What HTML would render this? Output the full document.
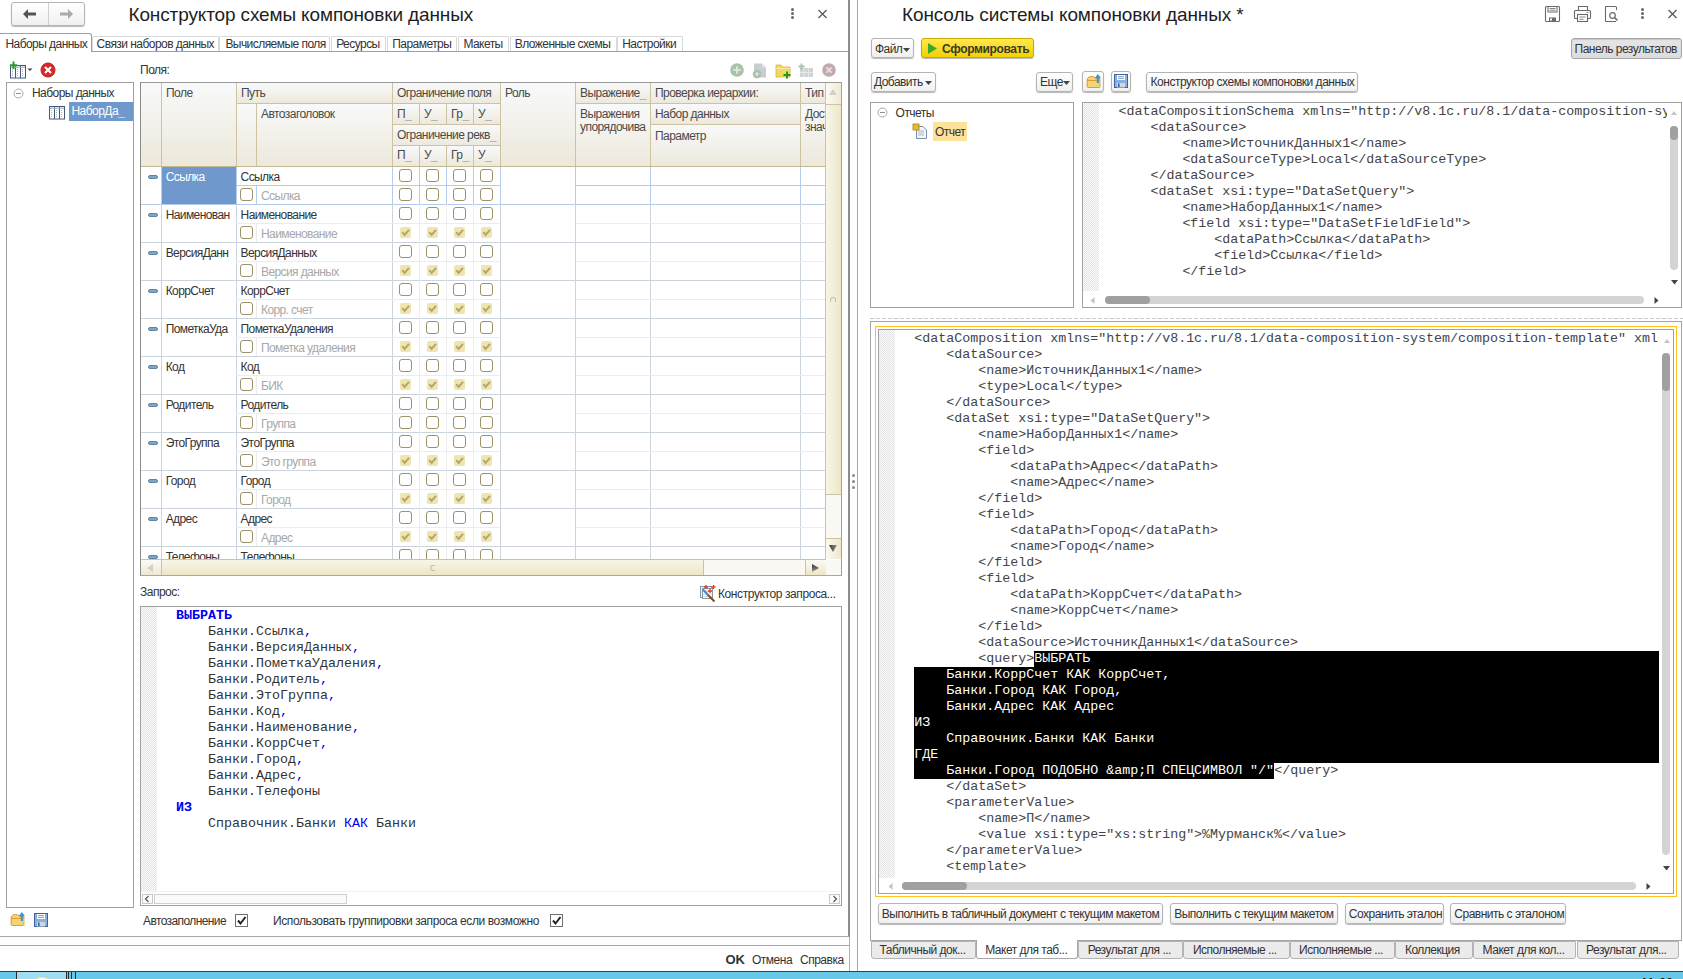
<!DOCTYPE html><html><head><meta charset="utf-8"><style>
*{margin:0;padding:0;box-sizing:border-box}
html,body{width:1683px;height:979px;overflow:hidden;background:#fff;position:relative}
body div{position:absolute}
.t{font-family:"Liberation Sans",sans-serif;white-space:nowrap}
.m{font-family:"Liberation Mono",monospace;white-space:pre;font-size:13.33px;line-height:16px;color:#444}
.btn{border:1px solid #b4b4b4;border-radius:3px;background:linear-gradient(#fff,#f0f0f0);box-shadow:0 1px 1px rgba(0,0,0,.28)}
.cb{width:13px;height:13px;border:1px solid #9c926a;border-radius:3px;background:#fff}
.cbc{width:11px;height:11px;border-radius:2px;background:#efe5b0}
.hatch{background:repeating-conic-gradient(#e2e2e2 0 25%,#fdfdfd 0 50%) 0 0/2px 2px}
</style></head><body><div class="btn" style="left:11px;top:2px;width:74px;height:24px"></div>
<div style="left:48px;top:3px;width:1px;height:22px;background:#d0d0d0;"></div>
<svg style="position:absolute;left:22px;top:8px" width="16" height="12" viewBox="0 0 16 12"><path d="M1 6 L6 1 L6 4.5 L14 4.5 L14 7.5 L6 7.5 L6 11 Z" fill="#555"/></svg>
<svg style="position:absolute;left:58px;top:8px" width="16" height="12" viewBox="0 0 16 12"><path d="M15 6 L10 1 L10 4.5 L2 4.5 L2 7.5 L10 7.5 L10 11 Z" fill="#aaa"/></svg>
<div class="t" style="left:128.5px;top:4.42px;font-size:19px;line-height:22px;color:#1e1e1e;letter-spacing:-0.13px;">Конструктор схемы компоновки данных</div>
<div style="left:790.7px;top:8.1px;width:3px;height:3px;border-radius:50%;background:#666"></div>
<div style="left:790.7px;top:12.2px;width:3px;height:3px;border-radius:50%;background:#666"></div>
<div style="left:790.7px;top:16.3px;width:3px;height:3px;border-radius:50%;background:#666"></div>
<svg style="position:absolute;left:817px;top:9px" width="11" height="10" viewBox="0 0 11 10"><path d="M1.5 1 L9.5 9 M9.5 1 L1.5 9" stroke="#555" stroke-width="1.2"/></svg>
<div style="left:-1px;top:33px;width:92.6px;height:19px;border:1px solid #a0a0a0;border-bottom:none;border-radius:0 3px 0 0;background:#fff;z-index:2"></div>
<div class="t" style="left:5.4px;top:37.04px;font-size:12px;line-height:14px;color:#333;letter-spacing:-0.55px;z-index:3">Наборы данных</div>
<div style="left:91.9px;top:35.5px;width:127.2px;height:16px;border:1px solid #d8d8d8;border-bottom:none;border-radius:2px 2px 0 0;background:#fff"></div>
<div class="t" style="left:96.6px;top:37.04px;font-size:12px;line-height:14px;color:#333;letter-spacing:-0.55px;z-index:3">Связи наборов данных</div>
<div style="left:219.4px;top:35.5px;width:110.8px;height:16px;border:1px solid #d8d8d8;border-bottom:none;border-radius:2px 2px 0 0;background:#fff"></div>
<div class="t" style="left:225.4px;top:37.04px;font-size:12px;line-height:14px;color:#333;letter-spacing:-0.55px;z-index:3">Вычисляемые поля</div>
<div style="left:330.5px;top:35.5px;width:55.8px;height:16px;border:1px solid #d8d8d8;border-bottom:none;border-radius:2px 2px 0 0;background:#fff"></div>
<div class="t" style="left:336.2px;top:37.04px;font-size:12px;line-height:14px;color:#333;letter-spacing:-0.55px;z-index:3">Ресурсы</div>
<div style="left:386.6px;top:35.5px;width:70.8px;height:16px;border:1px solid #d8d8d8;border-bottom:none;border-radius:2px 2px 0 0;background:#fff"></div>
<div class="t" style="left:392.3px;top:37.04px;font-size:12px;line-height:14px;color:#333;letter-spacing:-0.55px;z-index:3">Параметры</div>
<div style="left:457.7px;top:35.5px;width:51.6px;height:16px;border:1px solid #d8d8d8;border-bottom:none;border-radius:2px 2px 0 0;background:#fff"></div>
<div class="t" style="left:463.4px;top:37.04px;font-size:12px;line-height:14px;color:#333;letter-spacing:-0.55px;z-index:3">Макеты</div>
<div style="left:509.6px;top:35.5px;width:107.1px;height:16px;border:1px solid #d8d8d8;border-bottom:none;border-radius:2px 2px 0 0;background:#fff"></div>
<div class="t" style="left:514.8px;top:37.04px;font-size:12px;line-height:14px;color:#333;letter-spacing:-0.55px;z-index:3">Вложенные схемы</div>
<div style="left:617.0px;top:35.5px;width:66.4px;height:16px;border:1px solid #d8d8d8;border-bottom:none;border-radius:2px 2px 0 0;background:#fff"></div>
<div class="t" style="left:622.2px;top:37.04px;font-size:12px;line-height:14px;color:#333;letter-spacing:-0.55px;z-index:3">Настройки</div>
<div style="left:91px;top:51px;width:758px;height:1px;background:#a0a0a0;"></div>
<div style="left:848px;top:0px;width:2px;height:937px;background:#8c8c8c;"></div>
<div style="left:849px;top:937px;width:1px;height:34px;background:#b0b0b0;"></div>
<div style="left:0px;top:936px;width:849px;height:1px;background:#a8a8a8;"></div>
<div style="left:0px;top:945px;width:850px;height:1px;background:#a8a8a8;"></div>
<div class="t" style="left:725.5px;top:952.00px;font-size:13px;line-height:15px;color:#333;letter-spacing:0px;font-weight:bold;">OK</div>
<div class="t" style="left:752px;top:952.84px;font-size:12px;line-height:14px;color:#333;letter-spacing:-0.5px;">Отмена</div>
<div class="t" style="left:800px;top:952.84px;font-size:12px;line-height:14px;color:#333;letter-spacing:-0.5px;">Справка</div>
<div style="left:857px;top:0px;width:1px;height:971px;background:#a8a8a8;"></div>
<div style="left:851.5px;top:474px;width:3px;height:3px;border-radius:50%;background:#8a8a8a"></div>
<div style="left:851.5px;top:480px;width:3px;height:3px;border-radius:50%;background:#8a8a8a"></div>
<div style="left:851.5px;top:486px;width:3px;height:3px;border-radius:50%;background:#8a8a8a"></div>
<div style="left:0px;top:971px;width:1683px;height:1px;background:#3c3c3c;"></div>
<div style="left:0px;top:972px;width:1683px;height:7px;background:#67c8e8"></div>
<div style="left:16px;top:971px;width:51px;height:8px;border:1px solid #2a2a2a;border-bottom:none;background:#a2dcf0"></div>
<div style="left:34px;top:976.5px;width:16px;height:10px;border-radius:50%;border:1.5px solid #f0e090;background:#fff"></div>
<div style="left:67.5px;top:972px;width:1px;height:7px;background:#2a2a2a;"></div>
<div style="left:71px;top:972px;width:1px;height:7px;background:#2a2a2a;"></div>
<div style="left:75px;top:972px;width:1px;height:7px;background:#2a2a2a;"></div>
<div class="t" style="left:1641px;top:976px;font-size:12px;line-height:14px;color:#111;font-weight:bold;letter-spacing:0.5px">11:00</div>
<svg style="position:absolute;left:9px;top:61px" width="26" height="18" viewBox="0 0 26 18">
<rect x="1.5" y="4.5" width="15" height="12.5" fill="#fff" stroke="#435a7a" stroke-width="1"/>
<path d="M6.5 5V17M11.5 5V17" stroke="#435a7a" stroke-width="1"/>
<path d="M2 6.2H16" stroke="#9fb2c8" stroke-width="1.2"/>
<path d="M3 8.5h2M3 10.5h2M3 12.5h2M3 14.5h2M8 8.5h2M8 10.5h2M8 12.5h2M8 14.5h2M13 8.5h2M13 10.5h2M13 12.5h2M13 14.5h2" stroke="#a8b4c4" stroke-width="1" stroke-dasharray="1 1"/>
<path d="M4.5 0.5 V8 M0.8 4.2 H8.2" stroke="#2a9a2a" stroke-width="2"/>
<path d="M18.5 7.5 H23.5 L21 10 Z" fill="#444"/>
</svg>
<svg style="position:absolute;left:40px;top:62px" width="16" height="16" viewBox="0 0 16 16">
<circle cx="8" cy="8" r="7" fill="#d42a2a"/><circle cx="8" cy="8" r="7" fill="none" stroke="#b81c1c" stroke-width="1"/>
<path d="M5 5 L11 11 M11 5 L5 11" stroke="#fff" stroke-width="2"/></svg>
<div style="left:6px;top:82px;width:128px;height:826px;border:1px solid #a0a0a0;background:#fff"></div>
<svg style="position:absolute;left:13px;top:88px" width="11" height="11" viewBox="0 0 11 11"><circle cx="5.5" cy="5.5" r="4.5" fill="none" stroke="#a8a8a8" stroke-width="1"/><path d="M3 5.5h5" stroke="#909090" stroke-width="1"/></svg>
<div class="t" style="left:32px;top:85.54px;font-size:12px;line-height:14px;color:#333;letter-spacing:-0.55px;">Наборы данных</div>
<svg style="position:absolute;left:49px;top:106px" width="16" height="14" viewBox="0 0 16 14">
<rect x="0.5" y="0.5" width="15" height="12.5" fill="#fff" stroke="#435a7a"/>
<path d="M5.5 1V13M10.5 1V13" stroke="#435a7a"/>
<path d="M1 2.2H15" stroke="#9fb2c8" stroke-width="1.2"/>
<path d="M2 4.5h2M2 6.5h2M2 8.5h2M2 10.5h2M7 4.5h2M7 6.5h2M7 8.5h2M7 10.5h2M12 4.5h2M12 6.5h2M12 8.5h2M12 10.5h2" stroke="#a8b4c4" stroke-dasharray="1 1"/></svg>
<div style="left:69px;top:102px;width:64px;height:19px;background:#6f98cc"></div>
<div class="t" style="left:71.5px;top:104.4px;font-size:12px;line-height:14px;color:#fff;letter-spacing:-0.55px">НаборДа<span style="color:#c8d8ee">_</span></div>
<svg style="position:absolute;left:10px;top:911px" width="16" height="16" viewBox="0 0 16 16">
<path d="M1.2 6 L3.4 3.7 H7.6 L9.4 5.5 H13.9 V13.6 Q13.9 14.4 13.1 14.4 H2 Q1.2 14.4 1.2 13.6 Z" fill="#f8d878" stroke="#d8962c" stroke-width="1"/>
<path d="M1.4 7.4 H13.7" stroke="#d8962c" stroke-width="1"/><rect x="2" y="8" width="11.4" height="5.8" fill="#f6d374"/>
<path d="M11.8 10 V4.5" stroke="#2a9ae6" stroke-width="2"/><path d="M8.8 5 L11.8 1 L14.9 5 Z" fill="#2a9ae6"/></svg>
<svg style="position:absolute;left:33px;top:912px" width="16" height="16" viewBox="0 0 16 16">
<rect x="1.5" y="1.5" width="13" height="13" fill="#8ab0e0" stroke="#3a64a0"/>
<rect x="4" y="2" width="8" height="5" fill="#fff"/>
<path d="M5 3.6h6M5 5.4h6" stroke="#8aa0c0"/>
<rect x="4" y="10" width="8" height="4.5" fill="#d0d8d8"/><rect x="5" y="10.5" width="1.6" height="3.5" fill="#3a64a0"/></svg>
<div class="t" style="left:143px;top:914.04px;font-size:12px;line-height:14px;color:#333;letter-spacing:-0.6px;">Автозаполнение</div>
<div style="left:235px;top:914px;width:13px;height:13px;border:1px solid #707070;background:#fff"></div>
<svg style="position:absolute;left:236px;top:915px" width="11" height="11" viewBox="0 0 11 11"><path d="M2 5.5 L4.5 8.5 L9.5 2" stroke="#222" stroke-width="2" fill="none"/></svg>
<div class="t" style="left:273px;top:914.04px;font-size:12px;line-height:14px;color:#333;letter-spacing:-0.4px;">Использовать группировки запроса если возможно</div>
<div style="left:550px;top:914px;width:13px;height:13px;border:1px solid #707070;background:#fff"></div>
<svg style="position:absolute;left:551px;top:915px" width="11" height="11" viewBox="0 0 11 11"><path d="M2 5.5 L4.5 8.5 L9.5 2" stroke="#222" stroke-width="2" fill="none"/></svg>
<div style="left:140px;top:82px;width:702px;height:494px;background:#fff"></div>
<div style="left:141px;top:83px;width:21px;height:84px;background:linear-gradient(#f8f9fa,#ece8da)"></div>
<div style="left:162px;top:83px;width:75px;height:84px;background:linear-gradient(#f8f9fa,#ece8da)"></div>
<div style="left:237px;top:83px;width:156px;height:21px;background:linear-gradient(#f8f9fa,#ece8da)"></div>
<div style="left:237px;top:104px;width:20px;height:63px;background:linear-gradient(#f8f9fa,#ece8da)"></div>
<div style="left:257px;top:104px;width:136px;height:63px;background:linear-gradient(#f8f9fa,#ece8da)"></div>
<div style="left:393px;top:83px;width:108px;height:21px;background:linear-gradient(#f8f9fa,#ece8da)"></div>
<div style="left:393px;top:104px;width:27px;height:21px;background:linear-gradient(#f8f9fa,#ece8da)"></div>
<div style="left:393px;top:146px;width:27px;height:21px;background:linear-gradient(#f8f9fa,#ece8da)"></div>
<div style="left:420px;top:104px;width:27px;height:21px;background:linear-gradient(#f8f9fa,#ece8da)"></div>
<div style="left:420px;top:146px;width:27px;height:21px;background:linear-gradient(#f8f9fa,#ece8da)"></div>
<div style="left:447px;top:104px;width:27px;height:21px;background:linear-gradient(#f8f9fa,#ece8da)"></div>
<div style="left:447px;top:146px;width:27px;height:21px;background:linear-gradient(#f8f9fa,#ece8da)"></div>
<div style="left:474px;top:104px;width:27px;height:21px;background:linear-gradient(#f8f9fa,#ece8da)"></div>
<div style="left:474px;top:146px;width:27px;height:21px;background:linear-gradient(#f8f9fa,#ece8da)"></div>
<div style="left:393px;top:125px;width:108px;height:21px;background:linear-gradient(#f8f9fa,#ece8da)"></div>
<div style="left:501px;top:83px;width:75px;height:84px;background:linear-gradient(#f8f9fa,#ece8da)"></div>
<div style="left:576px;top:83px;width:75px;height:21px;background:linear-gradient(#f8f9fa,#ece8da)"></div>
<div style="left:576px;top:104px;width:75px;height:63px;background:linear-gradient(#f8f9fa,#ece8da)"></div>
<div style="left:651px;top:83px;width:150px;height:21px;background:linear-gradient(#f8f9fa,#ece8da)"></div>
<div style="left:651px;top:104px;width:150px;height:21px;background:linear-gradient(#f8f9fa,#ece8da)"></div>
<div style="left:651px;top:125px;width:150px;height:42px;background:linear-gradient(#f8f9fa,#ece8da)"></div>
<div style="left:801px;top:83px;width:25px;height:21px;background:linear-gradient(#f8f9fa,#ece8da)"></div>
<div style="left:801px;top:104px;width:25px;height:63px;background:linear-gradient(#f8f9fa,#ece8da)"></div>
<div style="left:161px;top:83px;width:1px;height:84px;background:#cdc3a0;"></div>
<div style="left:236px;top:83px;width:1px;height:84px;background:#cdc3a0;"></div>
<div style="left:256px;top:104px;width:1px;height:63px;background:#cdc3a0;"></div>
<div style="left:392px;top:83px;width:1px;height:84px;background:#cdc3a0;"></div>
<div style="left:419px;top:104px;width:1px;height:21px;background:#cdc3a0;"></div>
<div style="left:419px;top:146px;width:1px;height:21px;background:#cdc3a0;"></div>
<div style="left:446px;top:104px;width:1px;height:21px;background:#cdc3a0;"></div>
<div style="left:446px;top:146px;width:1px;height:21px;background:#cdc3a0;"></div>
<div style="left:473px;top:104px;width:1px;height:21px;background:#cdc3a0;"></div>
<div style="left:473px;top:146px;width:1px;height:21px;background:#cdc3a0;"></div>
<div style="left:500px;top:83px;width:1px;height:84px;background:#cdc3a0;"></div>
<div style="left:575px;top:83px;width:1px;height:84px;background:#cdc3a0;"></div>
<div style="left:650px;top:83px;width:1px;height:84px;background:#cdc3a0;"></div>
<div style="left:800px;top:83px;width:1px;height:84px;background:#cdc3a0;"></div>
<div style="left:825px;top:83px;width:1px;height:84px;background:#cdc3a0;"></div>
<div style="left:236px;top:103px;width:156px;height:1px;background:#cdc3a0;"></div>
<div style="left:392px;top:103px;width:108px;height:1px;background:#cdc3a0;"></div>
<div style="left:392px;top:124px;width:108px;height:1px;background:#cdc3a0;"></div>
<div style="left:392px;top:145px;width:108px;height:1px;background:#cdc3a0;"></div>
<div style="left:575px;top:103px;width:250px;height:1px;background:#cdc3a0;"></div>
<div style="left:650px;top:124px;width:150px;height:1px;background:#cdc3a0;"></div>
<div style="left:141px;top:166px;width:700px;height:1px;background:#c4b890;"></div>
<div class="t" style="left:166px;top:86.14px;font-size:12px;line-height:14px;color:#4a4a4a;letter-spacing:-0.55px;">Поле</div>
<div class="t" style="left:241px;top:86.14px;font-size:12px;line-height:14px;color:#4a4a4a;letter-spacing:-0.55px;">Путь</div>
<div class="t" style="left:261px;top:107.34px;font-size:12px;line-height:14px;color:#4a4a4a;letter-spacing:-0.55px;">Автозаголовок</div>
<div class="t" style="left:397px;top:86.14px;font-size:12px;line-height:14px;color:#4a4a4a;letter-spacing:-0.55px;">Ограничение поля</div>
<div class="t" style="left:397px;top:128.1px;font-size:12px;line-height:14px;color:#4a4a4a;letter-spacing:-0.55px">Ограничение рекв<span style="color:#b0b0b0">_</span></div>
<div class="t" style="left:397px;top:106.9px;font-size:12px;line-height:14px;color:#4a4a4a;letter-spacing:-0.55px">П<span style="color:#b0b0b0">_</span></div>
<div class="t" style="left:424px;top:106.9px;font-size:12px;line-height:14px;color:#4a4a4a;letter-spacing:-0.55px">У<span style="color:#b0b0b0">_</span></div>
<div class="t" style="left:451px;top:106.9px;font-size:12px;line-height:14px;color:#4a4a4a;letter-spacing:-0.55px">Гр<span style="color:#b0b0b0">_</span></div>
<div class="t" style="left:478px;top:106.9px;font-size:12px;line-height:14px;color:#4a4a4a;letter-spacing:-0.55px">У<span style="color:#b0b0b0">_</span></div>
<div class="t" style="left:397px;top:148.1px;font-size:12px;line-height:14px;color:#4a4a4a;letter-spacing:-0.55px">П<span style="color:#b0b0b0">_</span></div>
<div class="t" style="left:424px;top:148.1px;font-size:12px;line-height:14px;color:#4a4a4a;letter-spacing:-0.55px">У<span style="color:#b0b0b0">_</span></div>
<div class="t" style="left:451px;top:148.1px;font-size:12px;line-height:14px;color:#4a4a4a;letter-spacing:-0.55px">Гр<span style="color:#b0b0b0">_</span></div>
<div class="t" style="left:478px;top:148.1px;font-size:12px;line-height:14px;color:#4a4a4a;letter-spacing:-0.55px">У<span style="color:#b0b0b0">_</span></div>
<div class="t" style="left:505px;top:86.14px;font-size:12px;line-height:14px;color:#4a4a4a;letter-spacing:-0.55px;">Роль</div>
<div class="t" style="left:580px;top:85.7px;font-size:12px;line-height:14px;color:#4a4a4a;letter-spacing:-0.55px">Выражение<span style="color:#b0b0b0">_</span></div>
<div class="t" style="left:580px;top:107.34px;font-size:12px;line-height:14px;color:#4a4a4a;letter-spacing:-0.55px;">Выражения</div>
<div class="t" style="left:580px;top:120.34px;font-size:12px;line-height:14px;color:#4a4a4a;letter-spacing:-0.55px;">упорядочива</div>
<div class="t" style="left:655px;top:86.14px;font-size:12px;line-height:14px;color:#4a4a4a;letter-spacing:-0.55px;">Проверка иерархии:</div>
<div class="t" style="left:655px;top:107.34px;font-size:12px;line-height:14px;color:#4a4a4a;letter-spacing:-0.55px;">Набор данных</div>
<div class="t" style="left:655px;top:128.54px;font-size:12px;line-height:14px;color:#4a4a4a;letter-spacing:-0.55px;">Параметр</div>
<div style="left:801px;top:83px;width:24.3px;height:84px;overflow:hidden">
<div class="t" style="left:4px;top:3.14px;font-size:12px;line-height:14px;color:#4a4a4a;letter-spacing:-0.55px;">Тип</div>
<div class="t" style="left:4px;top:24.34px;font-size:12px;line-height:14px;color:#4a4a4a;letter-spacing:-0.55px;">Доступные</div>
<div class="t" style="left:4px;top:37.34px;font-size:12px;line-height:14px;color:#4a4a4a;letter-spacing:-0.55px;">значения</div>
</div>
<div style="left:141px;top:167px;width:684.3px;height:392.2px;overflow:hidden">
<div style="left:20.0px;top:-0.5999999999999943px;width:1px;height:38px;background:#b4cdee;"></div>
<div style="left:94.80000000000001px;top:-0.5999999999999943px;width:1px;height:38px;background:#b4cdee;"></div>
<div style="left:251.0px;top:-0.5999999999999943px;width:1px;height:38px;background:#b4cdee;"></div>
<div style="left:359.0px;top:-0.5999999999999943px;width:1px;height:38px;background:#b4cdee;"></div>
<div style="left:434.0px;top:-0.5999999999999943px;width:1px;height:38px;background:#b4cdee;"></div>
<div style="left:508.79999999999995px;top:-0.5999999999999943px;width:1px;height:38px;background:#b4cdee;"></div>
<div style="left:659.2px;top:-0.5999999999999943px;width:1px;height:38px;background:#b4cdee;"></div>
<div style="left:114.80000000000001px;top:18.400000000000006px;width:1px;height:19px;background:#b4cdee;"></div>
<div style="left:277.8px;top:-0.5999999999999943px;width:1px;height:38px;background:#b4cdee;"></div>
<div style="left:305.0px;top:-0.5999999999999943px;width:1px;height:38px;background:#b4cdee;"></div>
<div style="left:331.8px;top:-0.5999999999999943px;width:1px;height:38px;background:#b4cdee;"></div>
<div style="left:21.0px;top:-0.09999999999999432px;width:73.80000000000001px;height:37.5px;background:#6f98cc"></div>
<div style="left:95.30000000000001px;top:18.400000000000006px;width:264.2px;height:1px;background:#b4cdee;"></div>
<div style="left:434.5px;top:18.400000000000006px;width:249.79999999999995px;height:1px;background:#b4cdee;"></div>
<div style="left:0px;top:37.400000000000006px;width:685px;height:1px;background:#b4cdee;"></div>
<div style="left:7.0px;top:8.1px;width:10px;height:4px;border-radius:2px;background:#7ea6c8;border:1px solid #5f87aa"></div>
<div class="t" style="left:24.69999999999999px;top:2.74px;font-size:12px;line-height:14px;color:#fff;letter-spacing:-0.6px;">Ссылка</div>
<div class="t" style="left:99.6px;top:2.74px;font-size:12px;line-height:14px;color:#333;letter-spacing:-0.6px;">Ссылка</div>
<div class="cb" style="left:99.0px;top:20.9px"></div>
<div class="t" style="left:120px;top:21.54px;font-size:12px;line-height:14px;color:#a8a8a8;letter-spacing:-0.6px;">Ссылка</div>
<div class="cb" style="left:258.3px;top:2.0px"></div>
<div class="cb" style="left:258.3px;top:20.7px"></div>
<div class="cb" style="left:285.3px;top:2.0px"></div>
<div class="cb" style="left:285.3px;top:20.7px"></div>
<div class="cb" style="left:312.3px;top:2.0px"></div>
<div class="cb" style="left:312.3px;top:20.7px"></div>
<div class="cb" style="left:339.3px;top:2.0px"></div>
<div class="cb" style="left:339.3px;top:20.7px"></div>
<div style="left:20.0px;top:37.400000000000006px;width:1px;height:38px;background:#cbd3dc;"></div>
<div style="left:94.80000000000001px;top:37.400000000000006px;width:1px;height:38px;background:#cbd3dc;"></div>
<div style="left:251.0px;top:37.400000000000006px;width:1px;height:38px;background:#cbd3dc;"></div>
<div style="left:359.0px;top:37.400000000000006px;width:1px;height:38px;background:#cbd3dc;"></div>
<div style="left:434.0px;top:37.400000000000006px;width:1px;height:38px;background:#cbd3dc;"></div>
<div style="left:508.79999999999995px;top:37.400000000000006px;width:1px;height:38px;background:#cbd3dc;"></div>
<div style="left:659.2px;top:37.400000000000006px;width:1px;height:38px;background:#cbd3dc;"></div>
<div style="left:114.80000000000001px;top:56.400000000000006px;width:1px;height:19px;background:#ececec;"></div>
<div style="left:277.8px;top:37.400000000000006px;width:1px;height:38px;background:#ececec;"></div>
<div style="left:305.0px;top:37.400000000000006px;width:1px;height:38px;background:#ececec;"></div>
<div style="left:331.8px;top:37.400000000000006px;width:1px;height:38px;background:#ececec;"></div>
<div style="left:95.30000000000001px;top:56.400000000000006px;width:264.2px;height:1px;background:#ececec;"></div>
<div style="left:434.5px;top:56.400000000000006px;width:249.79999999999995px;height:1px;background:#ececec;"></div>
<div style="left:0px;top:75.4px;width:685px;height:1px;background:#cbd3dc;"></div>
<div style="left:7.0px;top:46.1px;width:10px;height:4px;border-radius:2px;background:#7ea6c8;border:1px solid #5f87aa"></div>
<div class="t" style="left:24.69999999999999px;top:40.74px;font-size:12px;line-height:14px;color:#333;letter-spacing:-0.6px;">Наименован</div>
<div class="t" style="left:99.6px;top:40.74px;font-size:12px;line-height:14px;color:#333;letter-spacing:-0.6px;">Наименование</div>
<div class="cb" style="left:99.0px;top:58.9px"></div>
<div class="t" style="left:120px;top:59.54px;font-size:12px;line-height:14px;color:#a8a8a8;letter-spacing:-0.6px;">Наименование</div>
<div class="cb" style="left:258.3px;top:40.0px"></div>
<div class="cbc" style="left:259.4px;top:60.0px"></div>
<svg style="position:absolute;left:259.4px;top:60.0px" width="11" height="11" viewBox="0 0 11 11"><path d="M2.3 5.2 L4.6 8 L9 2.8" stroke="#b5a866" stroke-width="2" fill="none"/></svg>
<div class="cb" style="left:285.3px;top:40.0px"></div>
<div class="cbc" style="left:286.4px;top:60.0px"></div>
<svg style="position:absolute;left:286.4px;top:60.0px" width="11" height="11" viewBox="0 0 11 11"><path d="M2.3 5.2 L4.6 8 L9 2.8" stroke="#b5a866" stroke-width="2" fill="none"/></svg>
<div class="cb" style="left:312.3px;top:40.0px"></div>
<div class="cbc" style="left:313.4px;top:60.0px"></div>
<svg style="position:absolute;left:313.4px;top:60.0px" width="11" height="11" viewBox="0 0 11 11"><path d="M2.3 5.2 L4.6 8 L9 2.8" stroke="#b5a866" stroke-width="2" fill="none"/></svg>
<div class="cb" style="left:339.3px;top:40.0px"></div>
<div class="cbc" style="left:340.4px;top:60.0px"></div>
<svg style="position:absolute;left:340.4px;top:60.0px" width="11" height="11" viewBox="0 0 11 11"><path d="M2.3 5.2 L4.6 8 L9 2.8" stroke="#b5a866" stroke-width="2" fill="none"/></svg>
<div style="left:20.0px;top:75.4px;width:1px;height:38px;background:#cbd3dc;"></div>
<div style="left:94.80000000000001px;top:75.4px;width:1px;height:38px;background:#cbd3dc;"></div>
<div style="left:251.0px;top:75.4px;width:1px;height:38px;background:#cbd3dc;"></div>
<div style="left:359.0px;top:75.4px;width:1px;height:38px;background:#cbd3dc;"></div>
<div style="left:434.0px;top:75.4px;width:1px;height:38px;background:#cbd3dc;"></div>
<div style="left:508.79999999999995px;top:75.4px;width:1px;height:38px;background:#cbd3dc;"></div>
<div style="left:659.2px;top:75.4px;width:1px;height:38px;background:#cbd3dc;"></div>
<div style="left:114.80000000000001px;top:94.4px;width:1px;height:19px;background:#ececec;"></div>
<div style="left:277.8px;top:75.4px;width:1px;height:38px;background:#ececec;"></div>
<div style="left:305.0px;top:75.4px;width:1px;height:38px;background:#ececec;"></div>
<div style="left:331.8px;top:75.4px;width:1px;height:38px;background:#ececec;"></div>
<div style="left:95.30000000000001px;top:94.4px;width:264.2px;height:1px;background:#ececec;"></div>
<div style="left:434.5px;top:94.4px;width:249.79999999999995px;height:1px;background:#ececec;"></div>
<div style="left:0px;top:113.4px;width:685px;height:1px;background:#cbd3dc;"></div>
<div style="left:7.0px;top:84.1px;width:10px;height:4px;border-radius:2px;background:#7ea6c8;border:1px solid #5f87aa"></div>
<div class="t" style="left:24.69999999999999px;top:78.74px;font-size:12px;line-height:14px;color:#333;letter-spacing:-0.6px;">ВерсияДанн</div>
<div class="t" style="left:99.6px;top:78.74px;font-size:12px;line-height:14px;color:#333;letter-spacing:-0.6px;">ВерсияДанных</div>
<div class="cb" style="left:99.0px;top:96.9px"></div>
<div class="t" style="left:120px;top:97.54px;font-size:12px;line-height:14px;color:#a8a8a8;letter-spacing:-0.6px;">Версия данных</div>
<div class="cb" style="left:258.3px;top:78.0px"></div>
<div class="cbc" style="left:259.4px;top:98.0px"></div>
<svg style="position:absolute;left:259.4px;top:98.0px" width="11" height="11" viewBox="0 0 11 11"><path d="M2.3 5.2 L4.6 8 L9 2.8" stroke="#b5a866" stroke-width="2" fill="none"/></svg>
<div class="cb" style="left:285.3px;top:78.0px"></div>
<div class="cbc" style="left:286.4px;top:98.0px"></div>
<svg style="position:absolute;left:286.4px;top:98.0px" width="11" height="11" viewBox="0 0 11 11"><path d="M2.3 5.2 L4.6 8 L9 2.8" stroke="#b5a866" stroke-width="2" fill="none"/></svg>
<div class="cb" style="left:312.3px;top:78.0px"></div>
<div class="cbc" style="left:313.4px;top:98.0px"></div>
<svg style="position:absolute;left:313.4px;top:98.0px" width="11" height="11" viewBox="0 0 11 11"><path d="M2.3 5.2 L4.6 8 L9 2.8" stroke="#b5a866" stroke-width="2" fill="none"/></svg>
<div class="cb" style="left:339.3px;top:78.0px"></div>
<div class="cbc" style="left:340.4px;top:98.0px"></div>
<svg style="position:absolute;left:340.4px;top:98.0px" width="11" height="11" viewBox="0 0 11 11"><path d="M2.3 5.2 L4.6 8 L9 2.8" stroke="#b5a866" stroke-width="2" fill="none"/></svg>
<div style="left:20.0px;top:113.39999999999998px;width:1px;height:38px;background:#cbd3dc;"></div>
<div style="left:94.80000000000001px;top:113.39999999999998px;width:1px;height:38px;background:#cbd3dc;"></div>
<div style="left:251.0px;top:113.39999999999998px;width:1px;height:38px;background:#cbd3dc;"></div>
<div style="left:359.0px;top:113.39999999999998px;width:1px;height:38px;background:#cbd3dc;"></div>
<div style="left:434.0px;top:113.39999999999998px;width:1px;height:38px;background:#cbd3dc;"></div>
<div style="left:508.79999999999995px;top:113.39999999999998px;width:1px;height:38px;background:#cbd3dc;"></div>
<div style="left:659.2px;top:113.39999999999998px;width:1px;height:38px;background:#cbd3dc;"></div>
<div style="left:114.80000000000001px;top:132.39999999999998px;width:1px;height:19px;background:#ececec;"></div>
<div style="left:277.8px;top:113.39999999999998px;width:1px;height:38px;background:#ececec;"></div>
<div style="left:305.0px;top:113.39999999999998px;width:1px;height:38px;background:#ececec;"></div>
<div style="left:331.8px;top:113.39999999999998px;width:1px;height:38px;background:#ececec;"></div>
<div style="left:95.30000000000001px;top:132.39999999999998px;width:264.2px;height:1px;background:#ececec;"></div>
<div style="left:434.5px;top:132.39999999999998px;width:249.79999999999995px;height:1px;background:#ececec;"></div>
<div style="left:0px;top:151.39999999999998px;width:685px;height:1px;background:#cbd3dc;"></div>
<div style="left:7.0px;top:122.1px;width:10px;height:4px;border-radius:2px;background:#7ea6c8;border:1px solid #5f87aa"></div>
<div class="t" style="left:24.69999999999999px;top:116.74px;font-size:12px;line-height:14px;color:#333;letter-spacing:-0.6px;">КоррСчет</div>
<div class="t" style="left:99.6px;top:116.74px;font-size:12px;line-height:14px;color:#333;letter-spacing:-0.6px;">КоррСчет</div>
<div class="cb" style="left:99.0px;top:134.9px"></div>
<div class="t" style="left:120px;top:135.54px;font-size:12px;line-height:14px;color:#a8a8a8;letter-spacing:-0.6px;">Корр. счет</div>
<div class="cb" style="left:258.3px;top:116.0px"></div>
<div class="cbc" style="left:259.4px;top:136.0px"></div>
<svg style="position:absolute;left:259.4px;top:136.0px" width="11" height="11" viewBox="0 0 11 11"><path d="M2.3 5.2 L4.6 8 L9 2.8" stroke="#b5a866" stroke-width="2" fill="none"/></svg>
<div class="cb" style="left:285.3px;top:116.0px"></div>
<div class="cbc" style="left:286.4px;top:136.0px"></div>
<svg style="position:absolute;left:286.4px;top:136.0px" width="11" height="11" viewBox="0 0 11 11"><path d="M2.3 5.2 L4.6 8 L9 2.8" stroke="#b5a866" stroke-width="2" fill="none"/></svg>
<div class="cb" style="left:312.3px;top:116.0px"></div>
<div class="cbc" style="left:313.4px;top:136.0px"></div>
<svg style="position:absolute;left:313.4px;top:136.0px" width="11" height="11" viewBox="0 0 11 11"><path d="M2.3 5.2 L4.6 8 L9 2.8" stroke="#b5a866" stroke-width="2" fill="none"/></svg>
<div class="cb" style="left:339.3px;top:116.0px"></div>
<div class="cbc" style="left:340.4px;top:136.0px"></div>
<svg style="position:absolute;left:340.4px;top:136.0px" width="11" height="11" viewBox="0 0 11 11"><path d="M2.3 5.2 L4.6 8 L9 2.8" stroke="#b5a866" stroke-width="2" fill="none"/></svg>
<div style="left:20.0px;top:151.39999999999998px;width:1px;height:38px;background:#cbd3dc;"></div>
<div style="left:94.80000000000001px;top:151.39999999999998px;width:1px;height:38px;background:#cbd3dc;"></div>
<div style="left:251.0px;top:151.39999999999998px;width:1px;height:38px;background:#cbd3dc;"></div>
<div style="left:359.0px;top:151.39999999999998px;width:1px;height:38px;background:#cbd3dc;"></div>
<div style="left:434.0px;top:151.39999999999998px;width:1px;height:38px;background:#cbd3dc;"></div>
<div style="left:508.79999999999995px;top:151.39999999999998px;width:1px;height:38px;background:#cbd3dc;"></div>
<div style="left:659.2px;top:151.39999999999998px;width:1px;height:38px;background:#cbd3dc;"></div>
<div style="left:114.80000000000001px;top:170.39999999999998px;width:1px;height:19px;background:#ececec;"></div>
<div style="left:277.8px;top:151.39999999999998px;width:1px;height:38px;background:#ececec;"></div>
<div style="left:305.0px;top:151.39999999999998px;width:1px;height:38px;background:#ececec;"></div>
<div style="left:331.8px;top:151.39999999999998px;width:1px;height:38px;background:#ececec;"></div>
<div style="left:95.30000000000001px;top:170.39999999999998px;width:264.2px;height:1px;background:#ececec;"></div>
<div style="left:434.5px;top:170.39999999999998px;width:249.79999999999995px;height:1px;background:#ececec;"></div>
<div style="left:0px;top:189.39999999999998px;width:685px;height:1px;background:#cbd3dc;"></div>
<div style="left:7.0px;top:160.1px;width:10px;height:4px;border-radius:2px;background:#7ea6c8;border:1px solid #5f87aa"></div>
<div class="t" style="left:24.69999999999999px;top:154.74px;font-size:12px;line-height:14px;color:#333;letter-spacing:-0.6px;">ПометкаУда</div>
<div class="t" style="left:99.6px;top:154.74px;font-size:12px;line-height:14px;color:#333;letter-spacing:-0.6px;">ПометкаУдаления</div>
<div class="cb" style="left:99.0px;top:172.9px"></div>
<div class="t" style="left:120px;top:173.54px;font-size:12px;line-height:14px;color:#a8a8a8;letter-spacing:-0.6px;">Пометка удаления</div>
<div class="cb" style="left:258.3px;top:154.0px"></div>
<div class="cbc" style="left:259.4px;top:174.0px"></div>
<svg style="position:absolute;left:259.4px;top:174.0px" width="11" height="11" viewBox="0 0 11 11"><path d="M2.3 5.2 L4.6 8 L9 2.8" stroke="#b5a866" stroke-width="2" fill="none"/></svg>
<div class="cb" style="left:285.3px;top:154.0px"></div>
<div class="cbc" style="left:286.4px;top:174.0px"></div>
<svg style="position:absolute;left:286.4px;top:174.0px" width="11" height="11" viewBox="0 0 11 11"><path d="M2.3 5.2 L4.6 8 L9 2.8" stroke="#b5a866" stroke-width="2" fill="none"/></svg>
<div class="cb" style="left:312.3px;top:154.0px"></div>
<div class="cbc" style="left:313.4px;top:174.0px"></div>
<svg style="position:absolute;left:313.4px;top:174.0px" width="11" height="11" viewBox="0 0 11 11"><path d="M2.3 5.2 L4.6 8 L9 2.8" stroke="#b5a866" stroke-width="2" fill="none"/></svg>
<div class="cb" style="left:339.3px;top:154.0px"></div>
<div class="cbc" style="left:340.4px;top:174.0px"></div>
<svg style="position:absolute;left:340.4px;top:174.0px" width="11" height="11" viewBox="0 0 11 11"><path d="M2.3 5.2 L4.6 8 L9 2.8" stroke="#b5a866" stroke-width="2" fill="none"/></svg>
<div style="left:20.0px;top:189.39999999999998px;width:1px;height:38px;background:#cbd3dc;"></div>
<div style="left:94.80000000000001px;top:189.39999999999998px;width:1px;height:38px;background:#cbd3dc;"></div>
<div style="left:251.0px;top:189.39999999999998px;width:1px;height:38px;background:#cbd3dc;"></div>
<div style="left:359.0px;top:189.39999999999998px;width:1px;height:38px;background:#cbd3dc;"></div>
<div style="left:434.0px;top:189.39999999999998px;width:1px;height:38px;background:#cbd3dc;"></div>
<div style="left:508.79999999999995px;top:189.39999999999998px;width:1px;height:38px;background:#cbd3dc;"></div>
<div style="left:659.2px;top:189.39999999999998px;width:1px;height:38px;background:#cbd3dc;"></div>
<div style="left:114.80000000000001px;top:208.39999999999998px;width:1px;height:19px;background:#ececec;"></div>
<div style="left:277.8px;top:189.39999999999998px;width:1px;height:38px;background:#ececec;"></div>
<div style="left:305.0px;top:189.39999999999998px;width:1px;height:38px;background:#ececec;"></div>
<div style="left:331.8px;top:189.39999999999998px;width:1px;height:38px;background:#ececec;"></div>
<div style="left:95.30000000000001px;top:208.39999999999998px;width:264.2px;height:1px;background:#ececec;"></div>
<div style="left:434.5px;top:208.39999999999998px;width:249.79999999999995px;height:1px;background:#ececec;"></div>
<div style="left:0px;top:227.39999999999998px;width:685px;height:1px;background:#cbd3dc;"></div>
<div style="left:7.0px;top:198.1px;width:10px;height:4px;border-radius:2px;background:#7ea6c8;border:1px solid #5f87aa"></div>
<div class="t" style="left:24.69999999999999px;top:192.74px;font-size:12px;line-height:14px;color:#333;letter-spacing:-0.6px;">Код</div>
<div class="t" style="left:99.6px;top:192.74px;font-size:12px;line-height:14px;color:#333;letter-spacing:-0.6px;">Код</div>
<div class="cb" style="left:99.0px;top:210.9px"></div>
<div class="t" style="left:120px;top:211.54px;font-size:12px;line-height:14px;color:#a8a8a8;letter-spacing:-0.6px;">БИК</div>
<div class="cb" style="left:258.3px;top:192.0px"></div>
<div class="cbc" style="left:259.4px;top:212.0px"></div>
<svg style="position:absolute;left:259.4px;top:212.0px" width="11" height="11" viewBox="0 0 11 11"><path d="M2.3 5.2 L4.6 8 L9 2.8" stroke="#b5a866" stroke-width="2" fill="none"/></svg>
<div class="cb" style="left:285.3px;top:192.0px"></div>
<div class="cbc" style="left:286.4px;top:212.0px"></div>
<svg style="position:absolute;left:286.4px;top:212.0px" width="11" height="11" viewBox="0 0 11 11"><path d="M2.3 5.2 L4.6 8 L9 2.8" stroke="#b5a866" stroke-width="2" fill="none"/></svg>
<div class="cb" style="left:312.3px;top:192.0px"></div>
<div class="cbc" style="left:313.4px;top:212.0px"></div>
<svg style="position:absolute;left:313.4px;top:212.0px" width="11" height="11" viewBox="0 0 11 11"><path d="M2.3 5.2 L4.6 8 L9 2.8" stroke="#b5a866" stroke-width="2" fill="none"/></svg>
<div class="cb" style="left:339.3px;top:192.0px"></div>
<div class="cbc" style="left:340.4px;top:212.0px"></div>
<svg style="position:absolute;left:340.4px;top:212.0px" width="11" height="11" viewBox="0 0 11 11"><path d="M2.3 5.2 L4.6 8 L9 2.8" stroke="#b5a866" stroke-width="2" fill="none"/></svg>
<div style="left:20.0px;top:227.39999999999998px;width:1px;height:38px;background:#cbd3dc;"></div>
<div style="left:94.80000000000001px;top:227.39999999999998px;width:1px;height:38px;background:#cbd3dc;"></div>
<div style="left:251.0px;top:227.39999999999998px;width:1px;height:38px;background:#cbd3dc;"></div>
<div style="left:359.0px;top:227.39999999999998px;width:1px;height:38px;background:#cbd3dc;"></div>
<div style="left:434.0px;top:227.39999999999998px;width:1px;height:38px;background:#cbd3dc;"></div>
<div style="left:508.79999999999995px;top:227.39999999999998px;width:1px;height:38px;background:#cbd3dc;"></div>
<div style="left:659.2px;top:227.39999999999998px;width:1px;height:38px;background:#cbd3dc;"></div>
<div style="left:114.80000000000001px;top:246.39999999999998px;width:1px;height:19px;background:#ececec;"></div>
<div style="left:277.8px;top:227.39999999999998px;width:1px;height:38px;background:#ececec;"></div>
<div style="left:305.0px;top:227.39999999999998px;width:1px;height:38px;background:#ececec;"></div>
<div style="left:331.8px;top:227.39999999999998px;width:1px;height:38px;background:#ececec;"></div>
<div style="left:95.30000000000001px;top:246.39999999999998px;width:264.2px;height:1px;background:#ececec;"></div>
<div style="left:434.5px;top:246.39999999999998px;width:249.79999999999995px;height:1px;background:#ececec;"></div>
<div style="left:0px;top:265.4px;width:685px;height:1px;background:#cbd3dc;"></div>
<div style="left:7.0px;top:236.1px;width:10px;height:4px;border-radius:2px;background:#7ea6c8;border:1px solid #5f87aa"></div>
<div class="t" style="left:24.69999999999999px;top:230.74px;font-size:12px;line-height:14px;color:#333;letter-spacing:-0.6px;">Родитель</div>
<div class="t" style="left:99.6px;top:230.74px;font-size:12px;line-height:14px;color:#333;letter-spacing:-0.6px;">Родитель</div>
<div class="cb" style="left:99.0px;top:248.9px"></div>
<div class="t" style="left:120px;top:249.54px;font-size:12px;line-height:14px;color:#a8a8a8;letter-spacing:-0.6px;">Группа</div>
<div class="cb" style="left:258.3px;top:230.0px"></div>
<div class="cb" style="left:258.3px;top:248.7px"></div>
<div class="cb" style="left:285.3px;top:230.0px"></div>
<div class="cb" style="left:285.3px;top:248.7px"></div>
<div class="cb" style="left:312.3px;top:230.0px"></div>
<div class="cb" style="left:312.3px;top:248.7px"></div>
<div class="cb" style="left:339.3px;top:230.0px"></div>
<div class="cb" style="left:339.3px;top:248.7px"></div>
<div style="left:20.0px;top:265.4px;width:1px;height:38px;background:#cbd3dc;"></div>
<div style="left:94.80000000000001px;top:265.4px;width:1px;height:38px;background:#cbd3dc;"></div>
<div style="left:251.0px;top:265.4px;width:1px;height:38px;background:#cbd3dc;"></div>
<div style="left:359.0px;top:265.4px;width:1px;height:38px;background:#cbd3dc;"></div>
<div style="left:434.0px;top:265.4px;width:1px;height:38px;background:#cbd3dc;"></div>
<div style="left:508.79999999999995px;top:265.4px;width:1px;height:38px;background:#cbd3dc;"></div>
<div style="left:659.2px;top:265.4px;width:1px;height:38px;background:#cbd3dc;"></div>
<div style="left:114.80000000000001px;top:284.4px;width:1px;height:19px;background:#ececec;"></div>
<div style="left:277.8px;top:265.4px;width:1px;height:38px;background:#ececec;"></div>
<div style="left:305.0px;top:265.4px;width:1px;height:38px;background:#ececec;"></div>
<div style="left:331.8px;top:265.4px;width:1px;height:38px;background:#ececec;"></div>
<div style="left:95.30000000000001px;top:284.4px;width:264.2px;height:1px;background:#ececec;"></div>
<div style="left:434.5px;top:284.4px;width:249.79999999999995px;height:1px;background:#ececec;"></div>
<div style="left:0px;top:303.4px;width:685px;height:1px;background:#cbd3dc;"></div>
<div style="left:7.0px;top:274.1px;width:10px;height:4px;border-radius:2px;background:#7ea6c8;border:1px solid #5f87aa"></div>
<div class="t" style="left:24.69999999999999px;top:268.74px;font-size:12px;line-height:14px;color:#333;letter-spacing:-0.6px;">ЭтоГруппа</div>
<div class="t" style="left:99.6px;top:268.74px;font-size:12px;line-height:14px;color:#333;letter-spacing:-0.6px;">ЭтоГруппа</div>
<div class="cb" style="left:99.0px;top:286.9px"></div>
<div class="t" style="left:120px;top:287.54px;font-size:12px;line-height:14px;color:#a8a8a8;letter-spacing:-0.6px;">Это группа</div>
<div class="cb" style="left:258.3px;top:268.0px"></div>
<div class="cbc" style="left:259.4px;top:288.0px"></div>
<svg style="position:absolute;left:259.4px;top:288.0px" width="11" height="11" viewBox="0 0 11 11"><path d="M2.3 5.2 L4.6 8 L9 2.8" stroke="#b5a866" stroke-width="2" fill="none"/></svg>
<div class="cb" style="left:285.3px;top:268.0px"></div>
<div class="cbc" style="left:286.4px;top:288.0px"></div>
<svg style="position:absolute;left:286.4px;top:288.0px" width="11" height="11" viewBox="0 0 11 11"><path d="M2.3 5.2 L4.6 8 L9 2.8" stroke="#b5a866" stroke-width="2" fill="none"/></svg>
<div class="cb" style="left:312.3px;top:268.0px"></div>
<div class="cbc" style="left:313.4px;top:288.0px"></div>
<svg style="position:absolute;left:313.4px;top:288.0px" width="11" height="11" viewBox="0 0 11 11"><path d="M2.3 5.2 L4.6 8 L9 2.8" stroke="#b5a866" stroke-width="2" fill="none"/></svg>
<div class="cb" style="left:339.3px;top:268.0px"></div>
<div class="cbc" style="left:340.4px;top:288.0px"></div>
<svg style="position:absolute;left:340.4px;top:288.0px" width="11" height="11" viewBox="0 0 11 11"><path d="M2.3 5.2 L4.6 8 L9 2.8" stroke="#b5a866" stroke-width="2" fill="none"/></svg>
<div style="left:20.0px;top:303.4px;width:1px;height:38px;background:#cbd3dc;"></div>
<div style="left:94.80000000000001px;top:303.4px;width:1px;height:38px;background:#cbd3dc;"></div>
<div style="left:251.0px;top:303.4px;width:1px;height:38px;background:#cbd3dc;"></div>
<div style="left:359.0px;top:303.4px;width:1px;height:38px;background:#cbd3dc;"></div>
<div style="left:434.0px;top:303.4px;width:1px;height:38px;background:#cbd3dc;"></div>
<div style="left:508.79999999999995px;top:303.4px;width:1px;height:38px;background:#cbd3dc;"></div>
<div style="left:659.2px;top:303.4px;width:1px;height:38px;background:#cbd3dc;"></div>
<div style="left:114.80000000000001px;top:322.4px;width:1px;height:19px;background:#ececec;"></div>
<div style="left:277.8px;top:303.4px;width:1px;height:38px;background:#ececec;"></div>
<div style="left:305.0px;top:303.4px;width:1px;height:38px;background:#ececec;"></div>
<div style="left:331.8px;top:303.4px;width:1px;height:38px;background:#ececec;"></div>
<div style="left:95.30000000000001px;top:322.4px;width:264.2px;height:1px;background:#ececec;"></div>
<div style="left:434.5px;top:322.4px;width:249.79999999999995px;height:1px;background:#ececec;"></div>
<div style="left:0px;top:341.4px;width:685px;height:1px;background:#cbd3dc;"></div>
<div style="left:7.0px;top:312.1px;width:10px;height:4px;border-radius:2px;background:#7ea6c8;border:1px solid #5f87aa"></div>
<div class="t" style="left:24.69999999999999px;top:306.74px;font-size:12px;line-height:14px;color:#333;letter-spacing:-0.6px;">Город</div>
<div class="t" style="left:99.6px;top:306.74px;font-size:12px;line-height:14px;color:#333;letter-spacing:-0.6px;">Город</div>
<div class="cb" style="left:99.0px;top:324.9px"></div>
<div class="t" style="left:120px;top:325.54px;font-size:12px;line-height:14px;color:#a8a8a8;letter-spacing:-0.6px;">Город</div>
<div class="cb" style="left:258.3px;top:306.0px"></div>
<div class="cbc" style="left:259.4px;top:326.0px"></div>
<svg style="position:absolute;left:259.4px;top:326.0px" width="11" height="11" viewBox="0 0 11 11"><path d="M2.3 5.2 L4.6 8 L9 2.8" stroke="#b5a866" stroke-width="2" fill="none"/></svg>
<div class="cb" style="left:285.3px;top:306.0px"></div>
<div class="cbc" style="left:286.4px;top:326.0px"></div>
<svg style="position:absolute;left:286.4px;top:326.0px" width="11" height="11" viewBox="0 0 11 11"><path d="M2.3 5.2 L4.6 8 L9 2.8" stroke="#b5a866" stroke-width="2" fill="none"/></svg>
<div class="cb" style="left:312.3px;top:306.0px"></div>
<div class="cbc" style="left:313.4px;top:326.0px"></div>
<svg style="position:absolute;left:313.4px;top:326.0px" width="11" height="11" viewBox="0 0 11 11"><path d="M2.3 5.2 L4.6 8 L9 2.8" stroke="#b5a866" stroke-width="2" fill="none"/></svg>
<div class="cb" style="left:339.3px;top:306.0px"></div>
<div class="cbc" style="left:340.4px;top:326.0px"></div>
<svg style="position:absolute;left:340.4px;top:326.0px" width="11" height="11" viewBox="0 0 11 11"><path d="M2.3 5.2 L4.6 8 L9 2.8" stroke="#b5a866" stroke-width="2" fill="none"/></svg>
<div style="left:20.0px;top:341.4px;width:1px;height:38px;background:#cbd3dc;"></div>
<div style="left:94.80000000000001px;top:341.4px;width:1px;height:38px;background:#cbd3dc;"></div>
<div style="left:251.0px;top:341.4px;width:1px;height:38px;background:#cbd3dc;"></div>
<div style="left:359.0px;top:341.4px;width:1px;height:38px;background:#cbd3dc;"></div>
<div style="left:434.0px;top:341.4px;width:1px;height:38px;background:#cbd3dc;"></div>
<div style="left:508.79999999999995px;top:341.4px;width:1px;height:38px;background:#cbd3dc;"></div>
<div style="left:659.2px;top:341.4px;width:1px;height:38px;background:#cbd3dc;"></div>
<div style="left:114.80000000000001px;top:360.4px;width:1px;height:19px;background:#ececec;"></div>
<div style="left:277.8px;top:341.4px;width:1px;height:38px;background:#ececec;"></div>
<div style="left:305.0px;top:341.4px;width:1px;height:38px;background:#ececec;"></div>
<div style="left:331.8px;top:341.4px;width:1px;height:38px;background:#ececec;"></div>
<div style="left:95.30000000000001px;top:360.4px;width:264.2px;height:1px;background:#ececec;"></div>
<div style="left:434.5px;top:360.4px;width:249.79999999999995px;height:1px;background:#ececec;"></div>
<div style="left:0px;top:379.4px;width:685px;height:1px;background:#cbd3dc;"></div>
<div style="left:7.0px;top:350.1px;width:10px;height:4px;border-radius:2px;background:#7ea6c8;border:1px solid #5f87aa"></div>
<div class="t" style="left:24.69999999999999px;top:344.74px;font-size:12px;line-height:14px;color:#333;letter-spacing:-0.6px;">Адрес</div>
<div class="t" style="left:99.6px;top:344.74px;font-size:12px;line-height:14px;color:#333;letter-spacing:-0.6px;">Адрес</div>
<div class="cb" style="left:99.0px;top:362.9px"></div>
<div class="t" style="left:120px;top:363.54px;font-size:12px;line-height:14px;color:#a8a8a8;letter-spacing:-0.6px;">Адрес</div>
<div class="cb" style="left:258.3px;top:344.0px"></div>
<div class="cbc" style="left:259.4px;top:364.0px"></div>
<svg style="position:absolute;left:259.4px;top:364.0px" width="11" height="11" viewBox="0 0 11 11"><path d="M2.3 5.2 L4.6 8 L9 2.8" stroke="#b5a866" stroke-width="2" fill="none"/></svg>
<div class="cb" style="left:285.3px;top:344.0px"></div>
<div class="cbc" style="left:286.4px;top:364.0px"></div>
<svg style="position:absolute;left:286.4px;top:364.0px" width="11" height="11" viewBox="0 0 11 11"><path d="M2.3 5.2 L4.6 8 L9 2.8" stroke="#b5a866" stroke-width="2" fill="none"/></svg>
<div class="cb" style="left:312.3px;top:344.0px"></div>
<div class="cbc" style="left:313.4px;top:364.0px"></div>
<svg style="position:absolute;left:313.4px;top:364.0px" width="11" height="11" viewBox="0 0 11 11"><path d="M2.3 5.2 L4.6 8 L9 2.8" stroke="#b5a866" stroke-width="2" fill="none"/></svg>
<div class="cb" style="left:339.3px;top:344.0px"></div>
<div class="cbc" style="left:340.4px;top:364.0px"></div>
<svg style="position:absolute;left:340.4px;top:364.0px" width="11" height="11" viewBox="0 0 11 11"><path d="M2.3 5.2 L4.6 8 L9 2.8" stroke="#b5a866" stroke-width="2" fill="none"/></svg>
<div style="left:20.0px;top:379.4px;width:1px;height:38px;background:#cbd3dc;"></div>
<div style="left:94.80000000000001px;top:379.4px;width:1px;height:38px;background:#cbd3dc;"></div>
<div style="left:251.0px;top:379.4px;width:1px;height:38px;background:#cbd3dc;"></div>
<div style="left:359.0px;top:379.4px;width:1px;height:38px;background:#cbd3dc;"></div>
<div style="left:434.0px;top:379.4px;width:1px;height:38px;background:#cbd3dc;"></div>
<div style="left:508.79999999999995px;top:379.4px;width:1px;height:38px;background:#cbd3dc;"></div>
<div style="left:659.2px;top:379.4px;width:1px;height:38px;background:#cbd3dc;"></div>
<div style="left:114.80000000000001px;top:398.4px;width:1px;height:19px;background:#ececec;"></div>
<div style="left:277.8px;top:379.4px;width:1px;height:38px;background:#ececec;"></div>
<div style="left:305.0px;top:379.4px;width:1px;height:38px;background:#ececec;"></div>
<div style="left:331.8px;top:379.4px;width:1px;height:38px;background:#ececec;"></div>
<div style="left:95.30000000000001px;top:398.4px;width:264.2px;height:1px;background:#ececec;"></div>
<div style="left:434.5px;top:398.4px;width:249.79999999999995px;height:1px;background:#ececec;"></div>
<div style="left:0px;top:417.4px;width:685px;height:1px;background:#cbd3dc;"></div>
<div style="left:7.0px;top:388.1px;width:10px;height:4px;border-radius:2px;background:#7ea6c8;border:1px solid #5f87aa"></div>
<div class="t" style="left:24.69999999999999px;top:382.74px;font-size:12px;line-height:14px;color:#333;letter-spacing:-0.6px;">Телефоны</div>
<div class="t" style="left:99.6px;top:382.74px;font-size:12px;line-height:14px;color:#333;letter-spacing:-0.6px;">Телефоны</div>
<div class="cb" style="left:99.0px;top:400.9px"></div>
<div class="t" style="left:120px;top:401.54px;font-size:12px;line-height:14px;color:#a8a8a8;letter-spacing:-0.6px;"></div>
<div class="cb" style="left:258.3px;top:382.0px"></div>
<div class="cb" style="left:258.3px;top:400.7px"></div>
<div class="cb" style="left:285.3px;top:382.0px"></div>
<div class="cb" style="left:285.3px;top:400.7px"></div>
<div class="cb" style="left:312.3px;top:382.0px"></div>
<div class="cb" style="left:312.3px;top:400.7px"></div>
<div class="cb" style="left:339.3px;top:382.0px"></div>
<div class="cb" style="left:339.3px;top:400.7px"></div>
</div>
<div style="left:825.5px;top:83px;width:16px;height:21px;background:linear-gradient(90deg,#fbfaf5,#efe9d2)"></div>
<svg style="position:absolute;left:828px;top:87px" width="10" height="10" viewBox="0 0 10 10"><path d="M1 8 L5 2 L9 8 Z" fill="#d2d0c4"/></svg>
<div style="left:825.5px;top:103.5px;width:16px;height:1px;background:#cdc3a0;"></div>
<div style="left:825.5px;top:104.5px;width:16px;height:390px;background:linear-gradient(90deg,#f8f5e8,#ede6c6)"></div>
<div style="left:830px;top:297px;width:6px;height:5px;border:1px solid #c8c0a0;border-radius:3px 3px 0 0;border-bottom:none"></div>
<div style="left:825.5px;top:494px;width:16px;height:1px;background:#cdc3a0;"></div>
<div style="left:825.5px;top:495px;width:16px;height:43.4px;background:#faf8f2"></div>
<div style="left:825.5px;top:538px;width:16px;height:1px;background:#cdc3a0;"></div>
<div style="left:825.5px;top:539px;width:16px;height:20.2px;background:linear-gradient(90deg,#fbfaf5,#ede6c6)"></div>
<svg style="position:absolute;left:828px;top:543px" width="10" height="10" viewBox="0 0 10 10"><defs><linearGradient id="ga" x1="0" x2="1"><stop offset="0" stop-color="#333"/><stop offset="1" stop-color="#999"/></linearGradient></defs><path d="M1 2 L9 2 L5 9 Z" fill="url(#ga)"/></svg>
<div style="left:825px;top:83px;width:1px;height:492px;background:#cdc3a0;"></div>
<div style="left:141px;top:559px;width:685px;height:1px;background:#cdc3a0;"></div>
<div style="left:141px;top:560px;width:20.5px;height:15px;background:linear-gradient(#fbfaf5,#efe9d2)"></div>
<svg style="position:absolute;left:145px;top:563px" width="10" height="10" viewBox="0 0 10 10"><path d="M8 1 L8 9 L2 5 Z" fill="#d2d0c4"/></svg>
<div style="left:161px;top:560px;width:1px;height:15px;background:#cdc3a0;"></div>
<div style="left:162px;top:560px;width:541px;height:15px;background:linear-gradient(#f8f5e8,#ede6c6)"></div>
<div style="left:430px;top:565px;width:5px;height:6px;border:1px solid #c8c0a0;border-radius:3px 0 0 3px;border-right:none"></div>
<div style="left:703px;top:560px;width:1px;height:15px;background:#cdc3a0;"></div>
<div style="left:704px;top:560px;width:100.5px;height:15px;background:#faf8f2"></div>
<div style="left:804.5px;top:560px;width:1px;height:15px;background:#cdc3a0;"></div>
<div style="left:805.5px;top:560px;width:20px;height:15px;background:linear-gradient(#fbfaf5,#ede6c6)"></div>
<svg style="position:absolute;left:810px;top:563px" width="10" height="10" viewBox="0 0 10 10"><defs><linearGradient id="gb" x1="0" x2="0" y1="0" y2="1"><stop offset="0" stop-color="#333"/><stop offset="1" stop-color="#999"/></linearGradient></defs><path d="M2 1 L2 9 L9 5 Z" fill="url(#gb)"/></svg>
<div style="left:826px;top:560px;width:15px;height:15px;background:#faf8f2"></div>
<div style="left:140px;top:82px;width:702px;height:494px;border:1px solid #a4a4a4;border-color:#9a9a9a #a0a0a0 #a8a8a0 #8a8a8a"></div>
<div class="t" style="left:140px;top:62.54px;font-size:12px;line-height:14px;color:#333;letter-spacing:-0.5px;">Поля:</div>
<svg style="position:absolute;left:729px;top:62px" width="110" height="17" viewBox="0 0 110 17">
<circle cx="8" cy="8" r="6.8" fill="#a9c2aa"/><path d="M8 4.2V11.8M4.2 8H11.8" stroke="#e4ece4" stroke-width="1.6"/>
<path d="M25 1.5 H33 L37 5.5 V15.5 H25 Z" fill="#c8cdd2"/><path d="M33 1.5 V5.5 H37" fill="#dfe3e6"/>
<circle cx="28" cy="12" r="4.3" fill="#a9c2aa"/><path d="M28 9.8V14.2M25.8 12H30.2" stroke="#e4ece4" stroke-width="1.2"/>
<path d="M47 3 H52 L54 5 H61 V15 H47 Z" fill="#f3d866" stroke="#d7b648" stroke-width=".8"/>
<path d="M47 6.5 H61" stroke="#fbeaa0"/>
<path d="M58 9.5 V16.5 M54.5 13 H61.5" stroke="#1e9a1e" stroke-width="2"/>
<rect x="71" y="6" width="13" height="9" fill="#cfd3d6"/><path d="M75 6V15M79.5 6V15M71 10.5H84" stroke="#e6e8ea"/>
<path d="M72.5 1.5V7.5M69.5 4.5H75.5" stroke="#a9c2aa" stroke-width="1.8"/>
<circle cx="100" cy="8" r="6.8" fill="#c2aaae"/><path d="M97.4 5.4L102.6 10.6M102.6 5.4L97.4 10.6" stroke="#ece2e3" stroke-width="1.6"/>
</svg>
<div class="t" style="left:140px;top:584.54px;font-size:12px;line-height:14px;color:#333;letter-spacing:-0.5px;">Запрос:</div>
<svg style="position:absolute;left:699px;top:584px" width="18" height="18" viewBox="0 0 18 18">
<rect x="1.5" y="2.5" width="11" height="11" fill="#f2f4f6" stroke="#8a96a4"/>
<rect x="3.5" y="4.5" width="10" height="10" fill="#fff" stroke="#8a96a4"/>
<path d="M4 7.5h9M4 10h9M4 12.5h9M8 5v9" stroke="#c4ccd6" stroke-width=".8"/>
<path d="M4 5.5 L9 11" stroke="#3a8ad8" stroke-width="2"/>
<path d="M9 11 L15.5 17.5" stroke="#7a5018" stroke-width="2"/>
<path d="M7 1v4M5 3h4M14.5 1v4M12.5 3h4M11 5v4M9 7h4" stroke="#e83a20" stroke-width="1.3"/>
</svg>
<div class="t" style="left:718px;top:587.34px;font-size:12px;line-height:14px;color:#333;letter-spacing:-0.4px;">Конструктор запроса...</div>
<div style="left:140px;top:606px;width:702px;height:300px;border:1px solid #a0a0a0;background:#fff"></div>
<div class="hatch" style="left:141px;top:607px;width:16px;height:283.5px"></div>
<div class="m" style="left:176px;top:608px;color:#0000f0;font-weight:bold">ВЫБРАТЬ</div>
<div class="m" style="left:208px;top:624px;color:#333">Банки.Ссылка<span style="color:#0000f0">,</span></div>
<div class="m" style="left:208px;top:640px;color:#333">Банки.ВерсияДанных<span style="color:#0000f0">,</span></div>
<div class="m" style="left:208px;top:656px;color:#333">Банки.ПометкаУдаления<span style="color:#0000f0">,</span></div>
<div class="m" style="left:208px;top:672px;color:#333">Банки.Родитель<span style="color:#0000f0">,</span></div>
<div class="m" style="left:208px;top:688px;color:#333">Банки.ЭтоГруппа<span style="color:#0000f0">,</span></div>
<div class="m" style="left:208px;top:704px;color:#333">Банки.Код<span style="color:#0000f0">,</span></div>
<div class="m" style="left:208px;top:720px;color:#333">Банки.Наименование<span style="color:#0000f0">,</span></div>
<div class="m" style="left:208px;top:736px;color:#333">Банки.КоррСчет<span style="color:#0000f0">,</span></div>
<div class="m" style="left:208px;top:752px;color:#333">Банки.Город<span style="color:#0000f0">,</span></div>
<div class="m" style="left:208px;top:768px;color:#333">Банки.Адрес<span style="color:#0000f0">,</span></div>
<div class="m" style="left:208px;top:784px;color:#333">Банки.Телефоны</div>
<div class="m" style="left:176px;top:800px;color:#0000f0;font-weight:bold">ИЗ</div>
<div class="m" style="left:208px;top:816px;color:#333">Справочник.Банки <span style="color:#0000f0">КАК</span> Банки</div>
<div style="left:141px;top:890.5px;width:700px;height:1px;background:#f2f2f2;"></div>
<div style="left:141.5px;top:893.5px;width:11px;height:10px;border:1px solid #c8c8c8;background:#fbfbfb"></div>
<svg style="position:absolute;left:143px;top:894.5px" width="8" height="8" viewBox="0 0 8 8"><path d="M5.5 1 L2.5 4 L5.5 7" stroke="#555" stroke-width="1.2" fill="none"/></svg>
<div style="left:154px;top:893.5px;width:193px;height:10px;border:1px solid #d0d0d0;background:#fafafa"></div>
<div style="left:829px;top:893.5px;width:11px;height:10px;border:1px solid #c8c8c8;background:#fbfbfb"></div>
<svg style="position:absolute;left:830.5px;top:894.5px" width="8" height="8" viewBox="0 0 8 8"><path d="M2.5 1 L5.5 4 L2.5 7" stroke="#555" stroke-width="1.2" fill="none"/></svg>
<div class="t" style="left:902px;top:4.42px;font-size:19px;line-height:22px;color:#1e1e1e;letter-spacing:-0.12px;">Консоль системы компоновки данных *</div>
<svg style="position:absolute;left:1544px;top:5px" width="140" height="18" viewBox="0 0 140 18">
<path d="M1.5 2.5 Q1.5 1.5 2.5 1.5 H14.5 Q15.5 1.5 15.5 2.5 V15.5 Q15.5 16.5 14.5 16.5 H2.5 Q1.5 16.5 1.5 15.5 Z" fill="none" stroke="#6a6a6a" stroke-width="1.1"/>
<rect x="4" y="1.5" width="9" height="5.5" fill="none" stroke="#6a6a6a" stroke-width="1"/><path d="M5.5 3.5h6M5.5 5.2h6" stroke="#6a6a6a" stroke-width=".8"/>
<rect x="5" y="12.5" width="7" height="4" fill="#6a6a6a"/><rect x="6" y="13.5" width="2" height="2" fill="#fff"/>
<path d="M34.5 5.5 V1.5 H43.5 V5.5" fill="none" stroke="#6a6a6a" stroke-width="1.1"/>
<path d="M33.5 13.5 H31.5 Q30.5 13.5 30.5 12.5 V6.5 Q30.5 5.5 31.5 5.5 H45.5 Q46.5 5.5 46.5 6.5 V12.5 Q46.5 13.5 45.5 13.5 H43.5" fill="none" stroke="#6a6a6a" stroke-width="1.1"/>
<rect x="33.5" y="9.5" width="10" height="7" fill="#fff" stroke="#6a6a6a" stroke-width="1.1"/><path d="M35.5 12h6M35.5 14.3h4" stroke="#6a6a6a" stroke-width=".8"/>
<path d="M42.5 7.5h2" stroke="#6a6a6a" stroke-width=".8"/>
<path d="M72 16.5 H62 Q61.5 16.5 61.5 16 V2 Q61.5 1.5 62 1.5 H71.5 Q72.5 1.5 72.5 2.5 V5" fill="none" stroke="#6a6a6a" stroke-width="1.1"/>
<circle cx="68.5" cy="10.5" r="2.8" fill="none" stroke="#6a6a6a" stroke-width="1.2"/><path d="M70.5 12.5 L73.5 15.5" stroke="#6a6a6a" stroke-width="1.6"/>
</svg>
<div style="left:1641px;top:7.5px;width:3px;height:3px;border-radius:50%;background:#666"></div>
<div style="left:1641px;top:12.0px;width:3px;height:3px;border-radius:50%;background:#666"></div>
<div style="left:1641px;top:16.0px;width:3px;height:3px;border-radius:50%;background:#666"></div>
<svg style="position:absolute;left:1667px;top:9px" width="11" height="10" viewBox="0 0 11 10"><path d="M1.5 1 L9.5 9 M9.5 1 L1.5 9" stroke="#555" stroke-width="1.2"/></svg>
<div class="btn" style="left:870.5px;top:38.3px;width:43.89999999999998px;height:20.200000000000003px;"></div>
<div class="t" style="left:875px;top:41.84px;font-size:12px;line-height:14px;color:#333;letter-spacing:-0.55px;">Файл</div>
<svg style="position:absolute;left:903px;top:48px" width="7" height="4" viewBox="0 0 7 4"><path d="M0 0 H7 L3.5 4 Z" fill="#444"/></svg>
<div class="btn" style="left:921.2px;top:38.3px;width:112.5px;height:20.200000000000003px;background:linear-gradient(#ffe94d,#f2d000);border-color:#c9a800"></div>
<svg style="position:absolute;left:927px;top:42px" width="11" height="13" viewBox="0 0 11 13"><path d="M1 1 L10 6.5 L1 12 Z" fill="#3aa82a"/></svg>
<div class="t" style="left:942px;top:41.84px;font-size:12px;line-height:14px;color:#3a3a2a;letter-spacing:-0.35px;font-weight:bold;">Сформировать</div>
<div class="btn" style="left:1570.5px;top:38.2px;width:111.09999999999991px;height:20.4px;background:linear-gradient(#e6e6e6,#dcdcdc);border-color:#a8a8a8;box-shadow:inset 0 1px 1px rgba(0,0,0,.15)"></div>
<div class="t" style="left:1574.5px;top:41.84px;font-size:12px;line-height:14px;color:#333;letter-spacing:-0.5px;">Панель результатов</div>
<div class="btn" style="left:870.5px;top:71.6px;width:65.0px;height:20.0px;"></div>
<div class="t" style="left:874px;top:74.64px;font-size:12px;line-height:14px;color:#333;letter-spacing:-0.55px;">Добавить</div>
<svg style="position:absolute;left:925px;top:81px" width="7" height="4" viewBox="0 0 7 4"><path d="M0 0 H7 L3.5 4 Z" fill="#444"/></svg>
<div class="btn" style="left:1036.2px;top:71.9px;width:37.09999999999991px;height:19.69999999999999px;"></div>
<div class="t" style="left:1040px;top:74.64px;font-size:12px;line-height:14px;color:#333;letter-spacing:-0.55px;">Еще</div>
<svg style="position:absolute;left:1063px;top:81px" width="7" height="4" viewBox="0 0 7 4"><path d="M0 0 H7 L3.5 4 Z" fill="#444"/></svg>
<div class="btn" style="left:1082.4px;top:71.2px;width:21.199999999999818px;height:20.39999999999999px;"></div>
<div class="btn" style="left:1110.5px;top:71.2px;width:20.799999999999955px;height:20.39999999999999px;"></div>
<svg style="position:absolute;left:1085.5px;top:73px" width="16" height="16" viewBox="0 0 16 16">
<path d="M1.2 6 L3.4 3.7 H7.6 L9.4 5.5 H13.9 V13.6 Q13.9 14.4 13.1 14.4 H2 Q1.2 14.4 1.2 13.6 Z" fill="#f8d878" stroke="#d8962c" stroke-width="1"/>
<path d="M1.4 7.4 H13.7" stroke="#d8962c" stroke-width="1"/><rect x="2" y="8" width="11.4" height="5.8" fill="#f6d374"/>
<path d="M11.8 10 V4.5" stroke="#2a9ae6" stroke-width="2"/><path d="M8.8 5 L11.8 1 L14.9 5 Z" fill="#2a9ae6"/></svg>
<svg style="position:absolute;left:1113px;top:73px" width="16" height="16" viewBox="0 0 16 16">
<rect x="1.5" y="1.5" width="13" height="13" fill="#8ab0e0" stroke="#3a64a0"/>
<rect x="4" y="2" width="8" height="5" fill="#fff"/>
<path d="M5 3.6h6M5 5.4h6" stroke="#8aa0c0"/>
<rect x="4" y="10" width="8" height="4.5" fill="#d0d8d8"/><rect x="5" y="10.5" width="1.6" height="3.5" fill="#3a64a0"/></svg>
<div class="btn" style="left:1146.4px;top:71.9px;width:212.0999999999999px;height:19.69999999999999px;"></div>
<div class="t" style="left:1150.6px;top:74.64px;font-size:12px;line-height:14px;color:#333;letter-spacing:-0.48px;">Конструктор схемы компоновки данных</div>
<div style="left:870px;top:102px;width:204px;height:206px;border:1px solid #a0a0a0;background:#fff"></div>
<svg style="position:absolute;left:877px;top:107px" width="11" height="11" viewBox="0 0 11 11"><circle cx="5.5" cy="5.5" r="4.5" fill="none" stroke="#a8a8a8" stroke-width="1"/><path d="M3 5.5h5" stroke="#909090" stroke-width="1"/></svg>
<div class="t" style="left:895.6px;top:105.54px;font-size:12px;line-height:14px;color:#333;letter-spacing:-0.55px;">Отчеты</div>
<svg style="position:absolute;left:912px;top:123px" width="17" height="17" viewBox="0 0 17 17">
<path d="M4.5 3.5 H11 L14.5 7 V15.5 H4.5 Z" fill="#f4f6f8" stroke="#7a8ea6"/>
<path d="M6 8h6M6 10h6M6 12h6" stroke="#9aaabb" stroke-width=".8"/>
<rect x="1" y="1" width="6" height="6" fill="#e8b830" stroke="#b08010" stroke-width=".8"/></svg>
<div style="left:933px;top:122px;width:34px;height:19px;background:#fde29a"></div>
<div class="t" style="left:935px;top:124.84px;font-size:12px;line-height:14px;color:#333;letter-spacing:-0.55px;">Отчет</div>
<div style="left:1082px;top:102px;width:600px;height:206px;border:1px solid #a0a0a0;background:#fff"></div>
<div class="hatch" style="left:1083px;top:103px;width:16px;height:188px"></div>
<div style="left:1099px;top:103px;width:568px;height:188px;overflow:hidden">
<div class="m" style="left:19.40000000000009px;top:0.5px">&lt;dataCompositionSchema xmlns=&quot;http://v8.1c.ru/8.1/data-composition-system/composition-template&quot;</div>
<div class="m" style="left:19.40000000000009px;top:16.5px">    &lt;dataSource&gt;</div>
<div class="m" style="left:19.40000000000009px;top:32.5px">        &lt;name&gt;ИсточникДанных1&lt;/name&gt;</div>
<div class="m" style="left:19.40000000000009px;top:48.5px">        &lt;dataSourceType&gt;Local&lt;/dataSourceType&gt;</div>
<div class="m" style="left:19.40000000000009px;top:64.5px">    &lt;/dataSource&gt;</div>
<div class="m" style="left:19.40000000000009px;top:80.5px">    &lt;dataSet xsi:type=&quot;DataSetQuery&quot;&gt;</div>
<div class="m" style="left:19.40000000000009px;top:96.5px">        &lt;name&gt;НаборДанных1&lt;/name&gt;</div>
<div class="m" style="left:19.40000000000009px;top:112.5px">        &lt;field xsi:type=&quot;DataSetFieldField&quot;&gt;</div>
<div class="m" style="left:19.40000000000009px;top:128.5px">            &lt;dataPath&gt;Ссылка&lt;/dataPath&gt;</div>
<div class="m" style="left:19.40000000000009px;top:144.5px">            &lt;field&gt;Ссылка&lt;/field&gt;</div>
<div class="m" style="left:19.40000000000009px;top:160.5px">        &lt;/field&gt;</div>
</div>
<svg style="position:absolute;left:1670px;top:110px" width="8" height="6" viewBox="0 0 8 6"><path d="M1 5 L4 1 L7 5 Z" fill="#c4c4c4"/></svg>
<div style="left:1670px;top:126px;width:8px;height:144px;border-radius:4px;background:#d4d4d4"></div>
<div style="left:1670px;top:126px;width:8px;height:14px;border-radius:4px;background:#a0a0a0"></div>
<svg style="position:absolute;left:1671px;top:279.5px" width="7" height="5" viewBox="0 0 7 5"><path d="M0 0 H7 L3.5 4.5 Z" fill="#444"/></svg>
<svg style="position:absolute;left:1090px;top:296.5px" width="5" height="7" viewBox="0 0 5 7"><path d="M4.5 0 V7 L0.5 3.5 Z" fill="#c4c4c4"/></svg>
<div style="left:1105px;top:296px;width:539px;height:8px;border-radius:4px;background:#d4d4d4"></div>
<div style="left:1105px;top:296px;width:45px;height:8px;border-radius:4px;background:#a0a0a0"></div>
<svg style="position:absolute;left:1653.5px;top:296.5px" width="5" height="7" viewBox="0 0 5 7"><path d="M0.5 0 V7 L4.5 3.5 Z" fill="#444"/></svg>
<div style="left:870px;top:318px;width:813px;height:1px;background:repeating-linear-gradient(90deg,#c8c8c8 0 4px,transparent 4px 6px)"></div>
<div style="left:870px;top:321px;width:812px;height:620px;border:1px solid #a4a4a4;background:#fff"></div>
<div style="left:875px;top:326px;width:802px;height:571px;border:1px solid #ffc21c"></div>
<div style="left:878px;top:329px;width:796px;height:565px;border:1px solid #a0a0a0;background:#fff"></div>
<div class="hatch" style="left:879px;top:330px;width:16px;height:548px"></div>
<div style="left:895px;top:330px;width:764px;height:548px;overflow:hidden">
<div class="m" style="left:19.200000000000045px;top:1.3000000000000114px">&lt;dataComposition xmlns=&quot;http://v8.1c.ru/8.1/data-composition-system/composition-template&quot; xmlns:xsi</div>
<div class="m" style="left:19.200000000000045px;top:17.30000000000001px">    &lt;dataSource&gt;</div>
<div class="m" style="left:19.200000000000045px;top:33.30000000000001px">        &lt;name&gt;ИсточникДанных1&lt;/name&gt;</div>
<div class="m" style="left:19.200000000000045px;top:49.30000000000001px">        &lt;type&gt;Local&lt;/type&gt;</div>
<div class="m" style="left:19.200000000000045px;top:65.30000000000001px">    &lt;/dataSource&gt;</div>
<div class="m" style="left:19.200000000000045px;top:81.30000000000001px">    &lt;dataSet xsi:type=&quot;DataSetQuery&quot;&gt;</div>
<div class="m" style="left:19.200000000000045px;top:97.30000000000001px">        &lt;name&gt;НаборДанных1&lt;/name&gt;</div>
<div class="m" style="left:19.200000000000045px;top:113.30000000000001px">        &lt;field&gt;</div>
<div class="m" style="left:19.200000000000045px;top:129.3px">            &lt;dataPath&gt;Адрес&lt;/dataPath&gt;</div>
<div class="m" style="left:19.200000000000045px;top:145.3px">            &lt;name&gt;Адрес&lt;/name&gt;</div>
<div class="m" style="left:19.200000000000045px;top:161.3px">        &lt;/field&gt;</div>
<div class="m" style="left:19.200000000000045px;top:177.3px">        &lt;field&gt;</div>
<div class="m" style="left:19.200000000000045px;top:193.3px">            &lt;dataPath&gt;Город&lt;/dataPath&gt;</div>
<div class="m" style="left:19.200000000000045px;top:209.3px">            &lt;name&gt;Город&lt;/name&gt;</div>
<div class="m" style="left:19.200000000000045px;top:225.3px">        &lt;/field&gt;</div>
<div class="m" style="left:19.200000000000045px;top:241.3px">        &lt;field&gt;</div>
<div class="m" style="left:19.200000000000045px;top:257.3px">            &lt;dataPath&gt;КоррСчет&lt;/dataPath&gt;</div>
<div class="m" style="left:19.200000000000045px;top:273.3px">            &lt;name&gt;КоррСчет&lt;/name&gt;</div>
<div class="m" style="left:19.200000000000045px;top:289.3px">        &lt;/field&gt;</div>
<div class="m" style="left:19.200000000000045px;top:305.3px">        &lt;dataSource&gt;ИсточникДанных1&lt;/dataSource&gt;</div>
<div class="m" style="left:19.200000000000045px;top:321.3px">        &lt;query&gt;</div>
<div style="left:139.20000000000005px;top:321.3px;width:625.0px;height:16px;background:#000"></div>
<div class="m" style="left:139.20000000000005px;top:321.3px;color:#fff">ВЫБРАТЬ</div>
<div style="left:19.200000000000045px;top:337.3px;width:745.0px;height:96px;background:#000"></div>
<div style="left:19.200000000000045px;top:433.3px;width:360px;height:16px;background:#000"></div>
<div class="m" style="left:19.200000000000045px;top:337.3px;color:#fff">    Банки.КоррСчет КАК КоррСчет,</div>
<div class="m" style="left:19.200000000000045px;top:353.3px;color:#fff">    Банки.Город КАК Город,</div>
<div class="m" style="left:19.200000000000045px;top:369.3px;color:#fff">    Банки.Адрес КАК Адрес</div>
<div class="m" style="left:19.200000000000045px;top:385.3px;color:#fff">ИЗ</div>
<div class="m" style="left:19.200000000000045px;top:401.3px;color:#fff">    Справочник.Банки КАК Банки</div>
<div class="m" style="left:19.200000000000045px;top:417.3px;color:#fff">ГДЕ</div>
<div class="m" style="left:19.200000000000045px;top:433.3px;color:#fff">    Банки.Город ПОДОБНО &amp;amp;П СПЕЦСИМВОЛ &quot;/&quot;</div>
<div class="m" style="left:379.20000000000005px;top:433.3px">&lt;/query&gt;</div>
<div class="m" style="left:19.200000000000045px;top:449.3px">    &lt;/dataSet&gt;</div>
<div class="m" style="left:19.200000000000045px;top:465.3px">    &lt;parameterValue&gt;</div>
<div class="m" style="left:19.200000000000045px;top:481.3px">        &lt;name&gt;П&lt;/name&gt;</div>
<div class="m" style="left:19.200000000000045px;top:497.3px">        &lt;value xsi:type=&quot;xs:string&quot;&gt;%Мурманск%&lt;/value&gt;</div>
<div class="m" style="left:19.200000000000045px;top:513.3px">    &lt;/parameterValue&gt;</div>
<div class="m" style="left:19.200000000000045px;top:529.3px">    &lt;template&gt;</div>
</div>
<div style="left:879px;top:878px;width:794px;height:15px;background:#fff"></div>
<svg style="position:absolute;left:1662.5px;top:338px" width="8" height="6" viewBox="0 0 8 6"><path d="M1 5 L4 1 L7 5 Z" fill="#c4c4c4"/></svg>
<div style="left:1662px;top:353px;width:8px;height:502px;border-radius:4px;background:#d4d4d4"></div>
<div style="left:1662px;top:353px;width:8px;height:38px;border-radius:4px;background:#a0a0a0"></div>
<svg style="position:absolute;left:1662.5px;top:865.5px" width="7" height="5" viewBox="0 0 7 5"><path d="M0 0 H7 L3.5 4.5 Z" fill="#444"/></svg>
<svg style="position:absolute;left:887.5px;top:882.5px" width="5" height="7" viewBox="0 0 5 7"><path d="M4.5 0 V7 L0.5 3.5 Z" fill="#c4c4c4"/></svg>
<div style="left:902px;top:882px;width:734px;height:8px;border-radius:4px;background:#d4d4d4"></div>
<div style="left:902px;top:882px;width:65px;height:8px;border-radius:4px;background:#a0a0a0"></div>
<svg style="position:absolute;left:1645.5px;top:882.5px" width="5" height="7" viewBox="0 0 5 7"><path d="M0.5 0 V7 L4.5 3.5 Z" fill="#444"/></svg>
<div class="btn" style="left:877.8px;top:903.4px;width:285.2px;height:20.4px"></div>
<div class="t" style="left:881.8px;top:906.84px;font-size:12px;line-height:14px;color:#333;letter-spacing:-0.5px;">Выполнить в табличный документ с текущим макетом</div>
<div class="btn" style="left:1170.2px;top:903.4px;width:168.2px;height:20.4px"></div>
<div class="t" style="left:1174.2px;top:906.84px;font-size:12px;line-height:14px;color:#333;letter-spacing:-0.5px;">Выполнить с текущим макетом</div>
<div class="btn" style="left:1344.8px;top:903.4px;width:98.8px;height:20.4px"></div>
<div class="t" style="left:1348.8px;top:906.84px;font-size:12px;line-height:14px;color:#333;letter-spacing:-0.5px;">Сохранить эталон</div>
<div class="btn" style="left:1450.3px;top:903.4px;width:116.2px;height:20.4px"></div>
<div class="t" style="left:1454.3px;top:906.84px;font-size:12px;line-height:14px;color:#333;letter-spacing:-0.5px;">Сравнить с эталоном</div>
<div style="left:870.5px;top:940.5px;width:105.2px;height:18px;border:1px solid #b4b4b4;border-radius:0 0 3px 3px;background:#ebebeb"></div>
<div class="t" style="left:879.5px;top:942.84px;font-size:12px;line-height:14px;color:#333;letter-spacing:-0.5px;z-index:3">Табличный док...</div>
<div style="left:975.7px;top:940px;width:102.5px;height:19px;border:1px solid #a8a8a8;border-top:none;border-radius:0 0 3px 3px;background:#fff;z-index:2"></div>
<div class="t" style="left:985.2px;top:942.84px;font-size:12px;line-height:14px;color:#333;letter-spacing:-0.5px;z-index:3">Макет для таб...</div>
<div style="left:1078.2px;top:940.5px;width:105.2px;height:18px;border:1px solid #b4b4b4;border-radius:0 0 3px 3px;background:#ebebeb"></div>
<div class="t" style="left:1087.7px;top:942.84px;font-size:12px;line-height:14px;color:#333;letter-spacing:-0.5px;z-index:3">Результат для ...</div>
<div style="left:1183.4px;top:940.5px;width:106.2px;height:18px;border:1px solid #b4b4b4;border-radius:0 0 3px 3px;background:#ebebeb"></div>
<div class="t" style="left:1192.9px;top:942.84px;font-size:12px;line-height:14px;color:#333;letter-spacing:-0.5px;z-index:3">Исполняемые ...</div>
<div style="left:1289.6px;top:940.5px;width:105.8px;height:18px;border:1px solid #b4b4b4;border-radius:0 0 3px 3px;background:#ebebeb"></div>
<div class="t" style="left:1299.1px;top:942.84px;font-size:12px;line-height:14px;color:#333;letter-spacing:-0.5px;z-index:3">Исполняемые ...</div>
<div style="left:1395.4px;top:940.5px;width:77.7px;height:18px;border:1px solid #b4b4b4;border-radius:0 0 3px 3px;background:#ebebeb"></div>
<div class="t" style="left:1404.9px;top:942.84px;font-size:12px;line-height:14px;color:#333;letter-spacing:-0.5px;z-index:3">Коллекция</div>
<div style="left:1473.1px;top:940.5px;width:103.4px;height:18px;border:1px solid #b4b4b4;border-radius:0 0 3px 3px;background:#ebebeb"></div>
<div class="t" style="left:1482.6px;top:942.84px;font-size:12px;line-height:14px;color:#333;letter-spacing:-0.5px;z-index:3">Макет для кол...</div>
<div style="left:1576.5px;top:940.5px;width:102.6px;height:18px;border:1px solid #b4b4b4;border-radius:0 0 3px 3px;background:#ebebeb"></div>
<div class="t" style="left:1586.0px;top:942.84px;font-size:12px;line-height:14px;color:#333;letter-spacing:-0.5px;z-index:3">Результат для...</div></body></html>
